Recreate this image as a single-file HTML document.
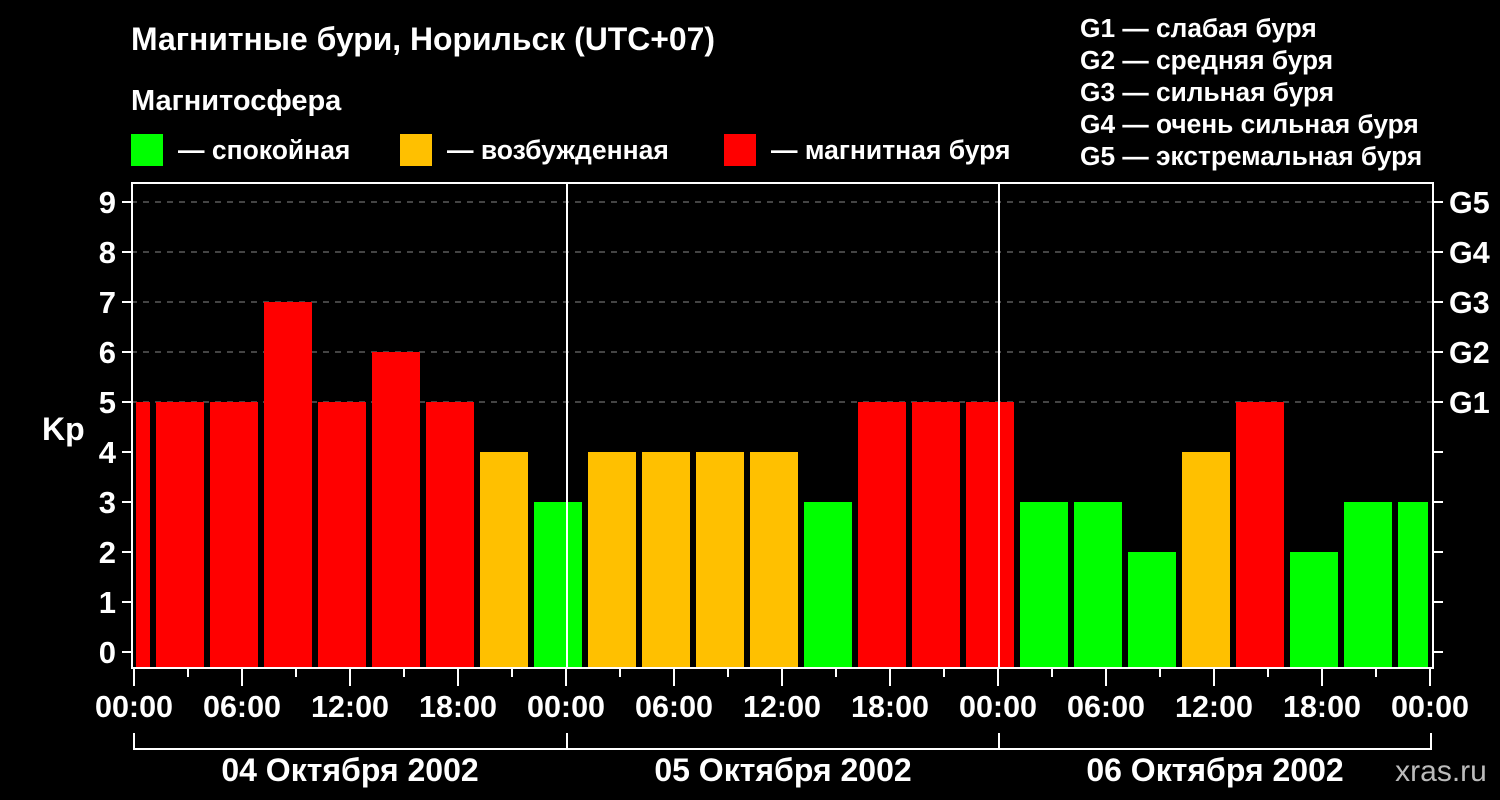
<!DOCTYPE html><html><head><meta charset="utf-8"><style>body{margin:0;background:#000}svg{display:block}text{font-family:"Liberation Sans",sans-serif;font-weight:bold;fill:#fff}</style></head><body>
<svg width="1500" height="800" xmlns="http://www.w3.org/2000/svg">
<rect width="1500" height="800" fill="#000"/>
<text x="131" y="50" font-size="32" textLength="584" lengthAdjust="spacingAndGlyphs">Магнитные бури, Норильск (UTC+07)</text>
<text x="131" y="110" font-size="29">Магнитосфера</text>
<rect x="131" y="134" width="32" height="32" fill="#00ff00"/><text x="178" y="159" font-size="26.5">— спокойная</text>
<rect x="400" y="134" width="32" height="32" fill="#ffc000"/><text x="447" y="159" font-size="26.5">— возбужденная</text>
<rect x="724" y="134" width="32" height="32" fill="#ff0000"/><text x="771" y="159" font-size="26.5">— магнитная буря</text>
<g font-size="26.3"><text x="1080" y="37">G1 — слабая буря</text><text x="1080" y="69">G2 — средняя буря</text><text x="1080" y="101">G3 — сильная буря</text><text x="1080" y="133">G4 — очень сильная буря</text><text x="1080" y="165">G5 — экстремальная буря</text></g>
<g stroke="#888" stroke-width="1" stroke-dasharray="6,6"><line x1="131" y1="202" x2="1433" y2="202"/><line x1="131" y1="252" x2="1433" y2="252"/><line x1="131" y1="302" x2="1433" y2="302"/><line x1="131" y1="352" x2="1433" y2="352"/><line x1="131" y1="402" x2="1433" y2="402"/></g>
<g id="bars"></g>
<g stroke="#fff" stroke-width="2" fill="none"><rect x="132" y="183" width="1301" height="485"/><line x1="567" y1="183" x2="567" y2="668"/><line x1="999" y1="183" x2="999" y2="668"/>
<path d="M134 733V749H1431V733M567 733V749M999 733V749"/></g>
<g id="ticks" stroke="#fff" stroke-width="2"></g>
<g font-size="31" text-anchor="end" id="yl"></g>
<text x="42" y="440" font-size="32">Kp</text>
<g font-size="30.5" id="gl"></g>
<g font-size="30.5" text-anchor="middle" id="xl"></g>
<g font-size="32" text-anchor="middle"><text x="350" y="781">04 Октября 2002</text><text x="783" y="781">05 Октября 2002</text><text x="1215" y="781">06 Октября 2002</text></g>
<text x="1441" y="781" font-size="30" text-anchor="middle" style="fill:#bbb;font-weight:normal">xras.ru</text>
<script>
var ns="http://www.w3.org/2000/svg";function el(p,t,a,txt){var e=document.createElementNS(ns,t);for(var k in a)e.setAttribute(k,a[k]);if(txt!=null)e.textContent=txt;document.getElementById(p).appendChild(e);}
var R="#ff0000",Y="#ffc000",G="#00ff00";
var v=[[5,R],[5,R],[7,R],[5,R],[6,R],[5,R],[4,Y],[3,G],[4,Y],[4,Y],[4,Y],[4,Y],[3,G],[5,R],[5,R],[5,R],[3,G],[3,G],[2,G],[4,Y],[5,R],[2,G],[3,G],[3,G]];
el("bars","rect",{x:136,y:402,width:14,height:266,fill:R});
v.forEach(function(b,i){var x=156+54*i,w=(i==23)?30:48;var y=652-50*b[0];el("bars","rect",{x:x,y:y,width:w,height:668-y,fill:b[1]});});
for(var k=0;k<=9;k++){var y=652-50*k;el("ticks","line",{x1:122,y1:y,x2:132,y2:y});el("ticks","line",{x1:1433,y1:y,x2:1443,y2:y});el("yl","text",{x:116,y:y+11},String(k));}
["G1","G2","G3","G4","G5"].forEach(function(g,i){el("gl","text",{x:1449,y:413-50*i},g);});
for(var h=0;h<=24;h++){var x=134+54*h;el("ticks","line",{x1:x,y1:668,x2:x,y2:h%2?677:686});}
var lab=["00:00","06:00","12:00","18:00"];for(var m=0;m<=12;m++){el("xl","text",{x:134+108*m,y:717},lab[m%4]);}
</script>
</svg></body></html>
